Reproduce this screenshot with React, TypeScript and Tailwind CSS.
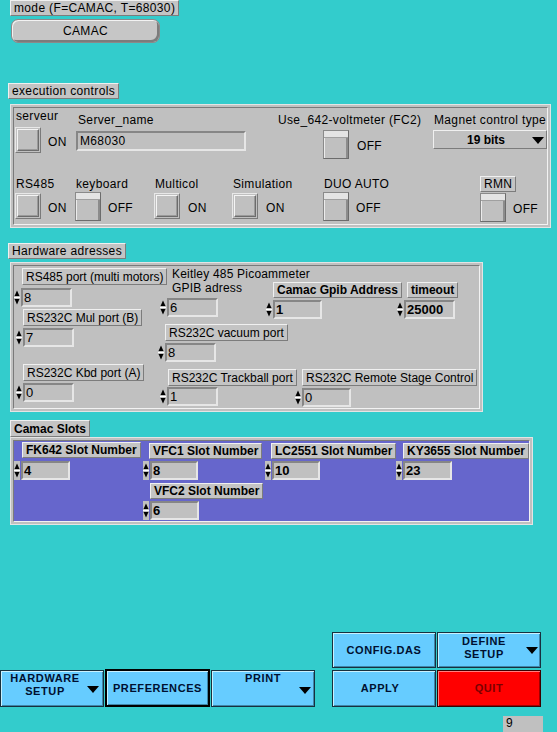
import React from 'react';

const raised = "border border-t-[#f0f0f0] border-l-[#f0f0f0] border-b-[#7c7c7c] border-r-[#7c7c7c]";

function Tag({ children, bold = false, cls = "h-[17px]" }: { children: React.ReactNode; bold?: boolean; cls?: string }) {
  return (
    <div className={`flex w-fit items-center px-[3px] leading-[14px] whitespace-nowrap bg-[#c4c4c4] ${raised} ${bold ? "font-bold tracking-normal" : ""} ${cls}`}>
      {children}
    </div>
  );
}

function Spinner() {
  return (
    <svg width="6" height="19" viewBox="0 0 6 19" className="shrink-0">
      <rect x="0" y="0" width="6" height="19" fill="#c0c0c0" />
      <polygon points="0.5,8 3,2.5 5.5,8" fill="#000" />
      <line x1="0" y1="9.5" x2="6" y2="9.5" stroke="#fff" strokeWidth="1" />
      <polygon points="0.5,11 3,16.5 5.5,11" fill="#000" />
    </svg>
  );
}

function NumBox({ value, bold = false, w = "w-[51px]" }: { value: string; bold?: boolean; w?: string }) {
  return (
    <div className="flex items-center">
      <Spinner />
      <div className={`${w} h-[19px] ml-[1px] bg-[#c0c0c0] border-2 border-t-[#868686] border-l-[#868686] border-b-[#e6e6e6] border-r-[#e6e6e6] pl-[1px] text-[13px] leading-[15px] ${bold ? "font-bold tracking-normal" : ""}`}>
        {value}
      </div>
    </div>
  );
}

function ToggleOn() {
  return (
    <div className="w-[26px] h-[26px] shrink-0 bg-[#c0c0c0] border border-t-[#e8e8e8] border-l-[#e8e8e8] border-b-[#7a7a7a] border-r-[#7a7a7a] p-[1px]">
      <div className="w-full h-full border border-t-[#f4f4f4] border-l-[#f4f4f4] border-b-[#6c6c6c] border-r-[#6c6c6c] shadow-[inset_-1px_-1px_0_#9a9a9a]" />
    </div>
  );
}

function ToggleOff() {
  return (
    <div className="w-[26px] h-[29px] shrink-0 bg-[#c0c0c0] border border-t-[#8a8a8a] border-l-[#8a8a8a] border-b-[#6c6c6c] border-r-[#6c6c6c] flex flex-col">
      <div className="h-[7px] bg-[#e4e4e4] border-b border-[#a0a0a0]" />
      <div className="flex-1 border-r-2 border-[#8c8c8c] shadow-[inset_1px_0_0_#ececec]" />
    </div>
  );
}

function Panel({ children, cls, inner = "bg-[#c0c0c0]" }: { children: React.ReactNode; cls: string; inner?: string }) {
  return (
    <div className={`bg-[#c0c0c0] border border-[#e4e4e4] p-[2px] ${cls}`}>
      <div className={`w-full h-full border border-t-[#7a7a7a] border-l-[#7a7a7a] border-b-[#f2f2f2] border-r-[#f2f2f2] ${inner}`}>
        {children}
      </div>
    </div>
  );
}

function Arrow() {
  return (
    <svg width="12" height="7" viewBox="0 0 12 7" className="block">
      <polygon points="0,0 12,0 6,7" fill="#000" />
    </svg>
  );
}

const blue = "bg-[#66ccff] border border-[#17303f] shadow-[inset_1px_1px_0_#c9f1ff,inset_-1px_-1px_0_#3f86a8] font-bold text-[11px] leading-[13px] text-[#001030] tracking-[0.6px]";

export default function App() {
  return (
    <div className="w-[557px] h-[732px] overflow-hidden bg-[#33cccc] text-[12px] leading-[14px] tracking-[0.35px] text-black font-['Liberation_Sans',Arial,sans-serif]">
      {/* mode */}
      <div className="pl-[10px]">
        <Tag cls="h-[16px]">mode (F=CAMAC, T=68030)</Tag>
      </div>
      <div className="ml-[11px] mt-[3px] w-[149px] h-[24px] rounded-[7px] bg-[#c6c6c6] border border-[#8a8a8a] shadow-[inset_1px_1px_0_#f2f2f2,inset_-2px_-2px_0_#7c7c7c] flex items-center justify-center">
        CAMAC
      </div>

      {/* execution controls */}
      <div className="pl-[8px] mt-[40px]">
        <Tag cls="h-[16px]">execution controls</Tag>
      </div>
      <Panel cls="ml-[10px] mt-[5px] w-[541px] h-[124px]">
        <div className="flex h-[62px]">
          <div className="w-[62px] pl-[1px] pt-[1px]">
            <div className="pl-[1px]">serveur</div>
            <div className="flex items-center mt-[4px]">
              <ToggleOn />
              <span className="ml-[7px] mt-[3px]">ON</span>
            </div>
          </div>
          <div className="w-[201px] pt-[5px]">
            <div className="pl-[2px]">Server_name</div>
            <div className="mt-[4px] w-[170px] h-[20px] bg-[#c0c0c0] border-2 border-t-[#868686] border-l-[#868686] border-b-[#e6e6e6] border-r-[#e6e6e6] pl-[2px] leading-[16px]">
              M68030
            </div>
          </div>
          <div className="w-[156px] pt-[5px]">
            <div className="pl-[1px] whitespace-nowrap">Use_642-voltmeter (FC2)</div>
            <div className="flex items-center mt-[3px] ml-[46px]">
              <ToggleOff />
              <span className="ml-[8px] mt-[2px]">OFF</span>
            </div>
          </div>
          <div className="pt-[5px]">
            <div className="pl-[1px] whitespace-nowrap">Magnet control type</div>
            <div className={`mt-[3px] w-[114px] h-[19px] bg-[#c0c0c0] ${raised} flex items-center`}>
              <span className="flex-1 text-center font-bold tracking-normal pl-[6px]">19 bits</span>
              <span className="mr-[2px] mt-[1px]"><Arrow /></span>
            </div>
          </div>
        </div>
        <div className="flex">
          <div className="w-[61px] pl-[1px] pt-[7px]">
            <div className="pl-[1px]">RS485</div>
            <div className="flex items-center mt-[2px]">
              <ToggleOn />
              <span className="ml-[7px] mt-[3px]">ON</span>
            </div>
          </div>
          <div className="w-[79px] pt-[7px]">
            <div className="pl-[1px]">keyboard</div>
            <div className="flex items-center mt-[1px]">
              <ToggleOff />
              <span className="ml-[7px] mt-[2px]">OFF</span>
            </div>
          </div>
          <div className="w-[78px] pt-[7px]">
            <div className="pl-[1px]">Multicol</div>
            <div className="flex items-center mt-[2px]">
              <ToggleOn />
              <span className="ml-[8px] mt-[3px]">ON</span>
            </div>
          </div>
          <div className="w-[91px] pt-[7px]">
            <div className="pl-[1px]">Simulation</div>
            <div className="flex items-center mt-[2px]">
              <ToggleOn />
              <span className="ml-[8px] mt-[3px]">ON</span>
            </div>
          </div>
          <div className="w-[157px] pt-[7px]">
            <div className="pl-[1px]">DUO AUTO</div>
            <div className="flex items-center mt-[1px]">
              <ToggleOff />
              <span className="ml-[7px] mt-[2px]">OFF</span>
            </div>
          </div>
          <div className="pt-[6px]">
            <Tag cls="h-[16px]">RMN</Tag>
            <div className="flex items-center mt-[1px]">
              <ToggleOff />
              <span className="ml-[7px] mt-[2px]">OFF</span>
            </div>
          </div>
        </div>
      </Panel>

      {/* hardware adresses */}
      <div className="pl-[8px] mt-[15px]">
        <Tag cls="h-[16px]">Hardware adresses</Tag>
      </div>
      <Panel cls="ml-[10px] mt-[3px] w-[473px] h-[150px]">
        <div className="flex tracking-normal">
          <div className="w-[144px] shrink-0">
            <div className="ml-[8px] mt-[2px]"><Tag>RS485 port (multi motors)</Tag></div>
            <div className="mt-[3px]"><NumBox value="8" /></div>
            <div className="ml-[9px] mt-[2px]"><Tag>RS232C Mul port (B)</Tag></div>
            <div className="ml-[2px] mt-[2px]"><NumBox value="7" /></div>
            <div className="ml-[9px] mt-[17px]"><Tag>RS232C Kbd port (A)</Tag></div>
            <div className="ml-[2px] mt-[2px]"><NumBox value="0" /></div>
          </div>
          <div className="w-[109px] shrink-0">
            <div className="ml-[14px] mt-[1px] leading-[14px] whitespace-nowrap tracking-[0.2px]">
              Keitley 485 Picoammeter
              <br />
              GPIB adress
            </div>
            <div className="ml-[2px] mt-[3px]"><NumBox value="6" /></div>
            <div className="ml-[7px] mt-[7px]"><Tag>RS232C vacuum port</Tag></div>
            <div className="mt-[2px]"><NumBox value="8" /></div>
            <div className="ml-[10px] mt-[7px]"><Tag>RS232C Trackball port</Tag></div>
            <div className="ml-[2px] mt-[1px]"><NumBox value="1" /></div>
          </div>
          <div className="flex-1">
            <div className="flex mt-[16px] ml-[6px]">
              <Tag bold cls="h-[16px]">Camac Gpib Address</Tag>
              <div className="ml-[5px]"><Tag bold cls="h-[16px]">timeout</Tag></div>
            </div>
            <div className="flex mt-[2px] ml-[-1px]">
              <NumBox value="1" bold w="w-[49px]" />
              <div className="ml-[75px]"><NumBox value="25000" bold /></div>
            </div>
            <div className="ml-[35px] mt-[50px]"><Tag>RS232C Remote Stage Control</Tag></div>
            <div className="ml-[28px] mt-[2px]"><NumBox value="0" w="w-[49px]" /></div>
          </div>
        </div>
      </Panel>

      {/* camac slots */}
      <div className="pl-[10px] mt-[8px]">
        <Tag bold>Camac Slots</Tag>
      </div>
      <Panel cls="ml-[10px] w-[523px] h-[88px]" inner="bg-[#6666cc]">
        <div className="flex">
          <div className="w-[129px] shrink-0">
            <div className="ml-[8px] mt-[1px]"><Tag bold cls="h-[16px]">FK642 Slot Number</Tag></div>
            <div className="mt-[3px]"><NumBox value="4" bold w="w-[49px]" /></div>
          </div>
          <div className="w-[122px] shrink-0">
            <div className="ml-[6px] mt-[2px]"><Tag bold cls="h-[16px]">VFC1 Slot Number</Tag></div>
            <div className="mt-[2px]"><NumBox value="8" bold w="w-[48px]" /></div>
            <div className="ml-[7px] mt-[3px]"><Tag bold cls="h-[16px]">VFC2 Slot Number</Tag></div>
            <div className="mt-[2px]"><NumBox value="6" bold w="w-[49px]" /></div>
          </div>
          <div className="w-[131px] shrink-0">
            <div className="ml-[6px] mt-[2px]"><Tag bold cls="h-[16px]">LC2551 Slot Number</Tag></div>
            <div className="mt-[2px]"><NumBox value="10" bold w="w-[48px]" /></div>
          </div>
          <div>
            <div className="ml-[7px] mt-[2px]"><Tag bold cls="h-[16px]">KY3655 Slot Number</Tag></div>
            <div className="mt-[2px]"><NumBox value="23" bold w="w-[49px]" /></div>
          </div>
        </div>
      </Panel>

      {/* bottom buttons */}
      <div className="flex items-end mt-[107px]">
        <div className="flex items-end">
          <div className={`w-[104px] h-[37px] ${blue} flex`}>
            <div className="flex-1 text-center pl-[2px] mt-[1px]">HARDWARE<br />SETUP</div>
            <div className="mr-[4px] mt-[15px]"><Arrow /></div>
          </div>
          <div className={`ml-[1px] w-[105px] h-[38px] ${blue} border-2 border-black flex items-center justify-center`}>
            PREFERENCES
          </div>
          <div className={`ml-[1px] w-[104px] h-[37px] ${blue} flex flex-col`}>
            <div className="text-center mt-[1px]">PRINT</div>
            <div className="self-end mr-[3px] mt-[2px]"><Arrow /></div>
          </div>
        </div>
        <div className="ml-[17px] grid grid-cols-[104px_104px] grid-rows-[36px_37px] gap-x-[1px] gap-y-[2px]">
          <div className={`${blue} flex items-center justify-center`}>CONFIG.DAS</div>
          <div className={`${blue} flex items-center`}>
            <div className="flex-1 text-center pl-[4px] mb-[5px]">DEFINE<br />SETUP</div>
            <div className="mr-[2px] mt-[1px]"><Arrow /></div>
          </div>
          <div className={`${blue} flex items-center justify-center pr-[8px]`}>APPLY</div>
          <div className="bg-[#ff0000] border border-[#3a0000] shadow-[inset_1px_1px_0_#ff8080,inset_-1px_-1px_0_#a00000] font-bold text-[11px] leading-[13px] text-[#7a0000] tracking-[0.6px] flex items-center justify-center">
            QUIT
          </div>
        </div>
      </div>
      <div className="ml-[503px] mt-[9px] w-[40px] h-[16px] bg-[#c0c0c0] pl-[3px] leading-[15px]">9</div>
    </div>
  );
}
